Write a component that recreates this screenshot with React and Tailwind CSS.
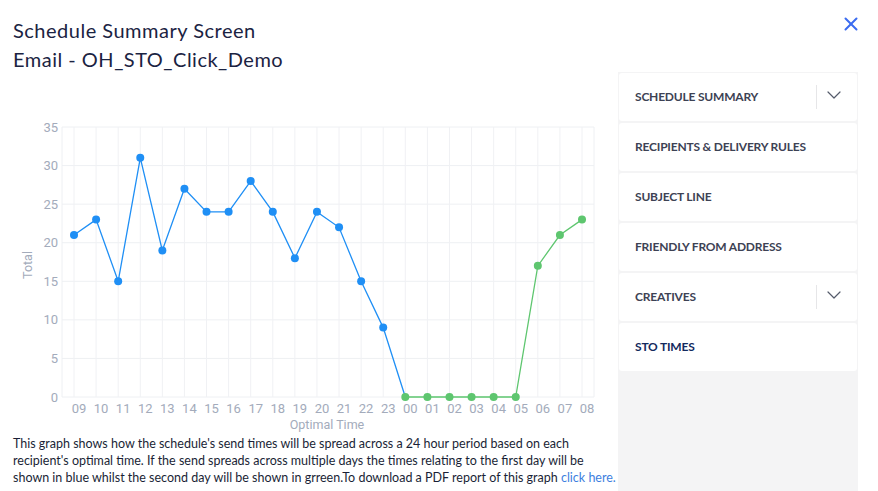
import { X, ChevronDown } from "lucide-react";

const data = [
  ["09", 21], ["10", 23], ["11", 15], ["12", 31], ["13", 19], ["14", 27],
  ["15", 24], ["16", 24], ["17", 28], ["18", 24], ["19", 18], ["20", 24],
  ["21", 22], ["22", 15], ["23", 9], ["00", 0], ["01", 0], ["02", 0],
  ["03", 0], ["04", 0], ["05", 0], ["06", 17], ["07", 21], ["08", 23],
];

const sections = [
  { name: "Schedule Summary", toggle: true },
  { name: "Recipients & Delivery Rules" },
  { name: "Subject Line" },
  { name: "Friendly From Address" },
  { name: "Creatives", toggle: true },
  { name: "STO Times", active: true },
];

const px = (i) => 74 + i * 22.087;
const py = (v) => 287 - v * 7.714;

const Chart = () => {
  const blue = data.slice(0, 16);
  const green = data.slice(15);
  const line = (pts, offset) =>
    pts.map(([, v], i) => `${px(i + offset).toFixed(1)},${py(v).toFixed(1)}`).join(" ");

  return (
    <svg width="610" height="325" className="block" style={{ fontFamily: "Roboto, sans-serif" }}>
      {/* grid */}
      {[0, 5, 10, 15, 20, 25, 30, 35].map((t) => (
        <g key={t}>
          <line x1="62" x2="594" y1={py(t)} y2={py(t)} stroke="#eef0f3" />
          <text x="58" y={py(t) + 4.5} textAnchor="end" fontSize="13" fill="#a3abbb">
            {t}
          </text>
        </g>
      ))}
      <line x1="62" x2="62" y1={py(35)} y2={py(0)} stroke="#eef0f3" />
      <line x1="594" x2="594" y1={py(35)} y2={py(0)} stroke="#eef0f3" />
      {data.map(([label], i) => (
        <g key={label}>
          <line x1={px(i)} x2={px(i)} y1={py(35)} y2={py(0)} stroke="#f0f1f4" />
          <text x={px(i) + 5} y="303" textAnchor="middle" fontSize="13" fill="#a3abbb">
            {label}
          </text>
        </g>
      ))}
      <text x="327" y="319" textAnchor="middle" fontSize="12.5" fill="#a3abbb">
        Optimal Time
      </text>
      <text
        x="0"
        y="0"
        fontSize="12.5"
        fill="#a3abbb"
        textAnchor="middle"
        transform="translate(32 155) rotate(-90)"
      >
        Total
      </text>

      {/* series */}
      <polyline points={line(green, 15)} fill="none" stroke="#5ec66f" strokeWidth="1.3" />
      <polyline points={line(blue, 0)} fill="none" stroke="#1f8ff5" strokeWidth="1.3" />
      {data.map(([label, v], i) => (
        <circle
          key={label}
          cx={px(i)}
          cy={py(v)}
          r="4"
          fill={i >= 15 ? "#5ec66f" : "#1f8ff5"}
        />
      ))}
    </svg>
  );
};

export default function App() {
  return (
    <div className="flex w-[878px] h-[491px] bg-white overflow-hidden" style={{ fontFamily: "Lato, sans-serif" }}>
      <div className="flex-1 min-w-0">
        <div className="pt-[16px] pl-[13px] text-[20px] leading-[29px] tracking-[0.5px] text-[#1b2342]">
          <div>Schedule Summary Screen</div>
          <div>Email - OH_STO_Click_Demo</div>
        </div>
        <div className="mt-[36px]">
          <Chart />
        </div>
        <p className="pl-[13px] text-[12.5px] leading-[17px] text-[#1a1f36] whitespace-nowrap">
          This graph shows how the schedule's send times will be spread across a 24 hour period based on each
          <br />
          recipient's optimal time. If the send spreads across multiple days the times relating to the first day will be
          <br />
          shown in blue whilst the second day will be shown in grreen.To download a PDF report of this graph{" "}
          <a href="#" className="text-[#3d7fe0]">click here.</a>
        </p>
      </div>

      <div className="w-[240px] mr-[20px] flex flex-col">
        <div className="h-[72px] flex justify-end items-start pt-[13px] -mr-[4px]">
          <X size={22} strokeWidth={2.2} className="text-[#3b6cf0]" />
        </div>
        <div className="flex-1 bg-[#f4f4f5] px-[1px] pt-[1px] flex flex-col gap-[2px]">
          {sections.map((s) => (
            <div
              key={s.name}
              className="h-[48px] bg-white rounded-[3px] flex items-center pl-[16px]"
            >
              <span
                className={`flex-1 text-[12px] font-bold uppercase tracking-[-0.2px] ${
                  s.active ? "text-[#132a5e]" : "text-[#3d4254]"
                }`}
              >
                {s.name}
              </span>
              {s.toggle && (
                <div className="flex items-center h-full">
                  <div className="w-px h-[24px] bg-[#e6e6e8]" />
                  <div className="w-[40px] flex justify-start pl-[5px] -mt-[5px]">
                    <ChevronDown size={24} strokeWidth={1.2} className="text-[#555b6b]" />
                  </div>
                </div>
              )}
            </div>
          ))}
        </div>
      </div>
    </div>
  );
}
